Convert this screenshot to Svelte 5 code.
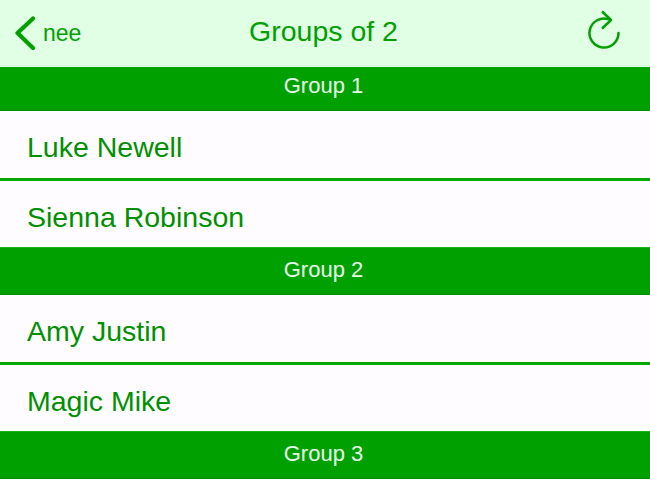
<script>
	const groups = [
		{ name: 'Group 1', people: ['Luke Newell', 'Sienna Robinson'] },
		{ name: 'Group 2', people: ['Amy Justin', 'Magic Mike'] },
		{ name: 'Group 3', people: [] }
	];
</script>

<div class="screen">
	<header class="nav">
		<button class="back">
			<svg width="24" height="36" viewBox="0 0 24 36">
				<path d="M21 2.5 L5.5 17 L21 32" fill="none" stroke="#00a000" stroke-width="4.2" stroke-linecap="round" stroke-linejoin="round" />
			</svg>
			<span>nee</span>
		</button>
		<h1>Groups of 2</h1>
		<button class="refresh" aria-label="Shuffle">
			<svg width="36" height="40" viewBox="0 0 36 40">
				<path d="M32.5 23 A14.5 14.5 0 1 1 23 9.4" fill="none" stroke="#00a000" stroke-width="2.5" stroke-linecap="round" />
				<path d="M16.7 2 L25 10 L16.7 18" fill="none" stroke="#00a000" stroke-width="2.5" stroke-linecap="round" stroke-linejoin="round" />
			</svg>
		</button>
	</header>

	{#each groups as group}
		<div class="group-title">{group.name}</div>
		{#each group.people as person, i}
			<div class="row" class:last={i === group.people.length - 1}>{person}</div>
		{/each}
	{/each}
</div>

<style>
	:global(body) { background: #fff; }
	.screen {
		width: 650px; height: 480px; overflow: hidden;
		background: #fefcff;
		font-family: "Liberation Sans", Arial, sans-serif;
	}
	.nav {
		height: 67px; display: flex; align-items: center; justify-content: space-between;
		padding: 0 28px 0 12px; background: #e0ffe4; position: relative;
	}
	.nav h1 {
		position: absolute; left: 0; right: 3px; top: 0; margin: 0;
		line-height: 63px; text-align: center; font-size: 28.5px; font-weight: normal; color: #00a000;
		pointer-events: none;
	}
	.back, .refresh {
		display: flex; align-items: center; background: none; border: none; padding: 0;
		color: #00a000; font: inherit; cursor: pointer;
	}
	.back { gap: 7px; font-size: 23px; }
	.refresh { align-self: flex-start; margin-top: 10px; }
	.group-title {
		height: 44px; line-height: 38px; text-align: center; box-sizing: border-box;
		padding-right: 3px;
		background: #00a000; border-bottom: 1px solid #008c00; color: #e8ffe8; font-size: 22px;
	}
	.row + .group-title { height: 48px; line-height: 43px; border-top: 1px solid #14b414; }
	.row {
		height: 70px; box-sizing: border-box; padding-left: 27px; line-height: 72px;
		color: #009000; font-size: 28.5px; border-bottom: 3px solid #00a800;
	}
	.row.last { height: 66px; border-bottom: none; line-height: 72px; }
</style>
